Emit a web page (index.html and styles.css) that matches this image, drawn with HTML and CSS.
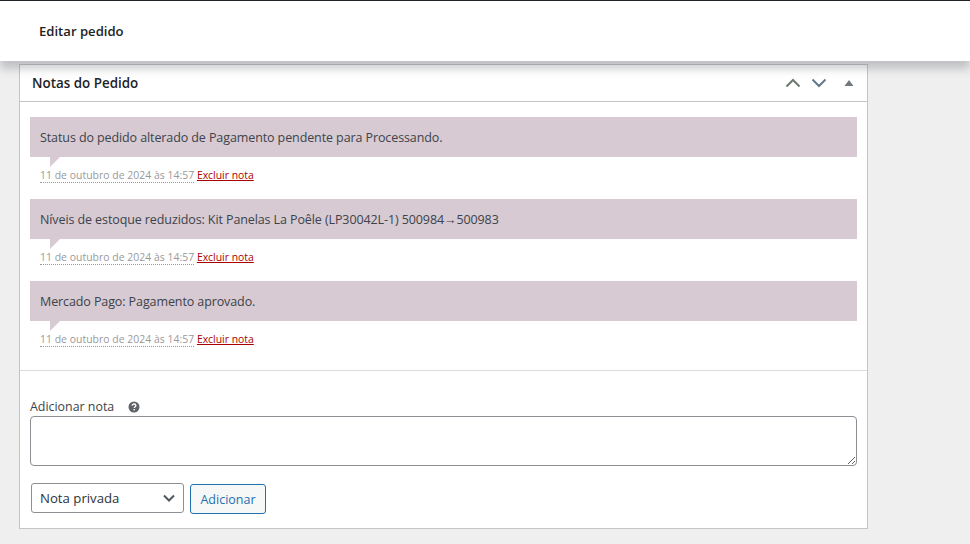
FILE: index.html
```
<!DOCTYPE html>
<html lang="pt-BR">
<head>
<meta charset="utf-8">
<title>Editar pedido</title>
<link rel="stylesheet" href="styles.css">
</head>
<body>
<header class="topbar"><h1 class="topbar-title">Editar pedido</h1></header>
<main class="content">
  <section class="card">
    <div class="card-head">
      <h2 class="card-title">Notas do Pedido</h2>
      <div class="card-actions">
        <svg class="chev" width="16" height="10" viewBox="0 0 16 10"><path d="M1.500 8.500 8 2l6.500 6.500" fill="none" stroke="#6d7a70" stroke-width="2"/></svg>
        <svg class="chev" width="16" height="10" viewBox="0 0 16 10"><path d="M1.500 1.500 8 8l6.500-6.500" fill="none" stroke="#64798c" stroke-width="2"/></svg>
        <svg class="tri" width="10" height="6" viewBox="0 0 10 6"><path d="M5 0l4.500 6h-9z" fill="#72777c"/></svg>
      </div>
    </div>
    <ul class="notes">
      <li class="note">
        <div class="bubble">Status do pedido alterado de Pagamento pendente para Processando.</div>
        <p class="meta"><abbr class="date">11 de outubro de 2024 às 14:57</abbr> <a class="del" href="#">Excluir nota</a></p>
      </li>
      <li class="note">
        <div class="bubble">Níveis de estoque reduzidos: Kit Panelas La Poêle (LP30042L-1) 500984→500983</div>
        <p class="meta"><abbr class="date">11 de outubro de 2024 às 14:57</abbr> <a class="del" href="#">Excluir nota</a></p>
      </li>
      <li class="note">
        <div class="bubble">Mercado Pago: Pagamento aprovado.</div>
        <p class="meta"><abbr class="date">11 de outubro de 2024 às 14:57</abbr> <a class="del" href="#">Excluir nota</a></p>
      </li>
    </ul>
    <form class="add">
      <label class="add-label" for="nota">Adicionar nota
        <svg class="help" width="12" height="12" viewBox="0 0 12 12"><circle cx="6" cy="6" r="5.500" fill="#5f6368"/><path d="M4.200 4.700c0-1.100.8-1.700 1.900-1.700s1.800.6 1.800 1.500c0 1.300-1.600 1.300-1.600 2.500" fill="none" stroke="#fff" stroke-width="1.300"/><rect x="5.500" y="8" width="1.400" height="1.400" fill="#fff"/></svg>
      </label>
      <textarea class="area" id="nota"></textarea>
      <div class="add-row">
        <div class="select">Nota privada
          <svg width="12" height="8" viewBox="0 0 12 8"><path d="M1 1.500l5 5 5-5" fill="none" stroke="#50575e" stroke-width="2"/></svg>
        </div>
        <button class="btn" type="button">Adicionar</button>
      </div>
    </form>
  </section>
</main>
</body>
</html>
```
FILE: styles.css
```
* { box-sizing: border-box; }
html, body { margin: 0; height: 100%; }
body {
  background: #efefef;
  font-family: "Open Sans", "Noto Sans", sans-serif;
  font-size: 12.5px;
  letter-spacing: -.1px;
  color: #3c434a;
  overflow: hidden;
}
.topbar {
  position: relative;
  z-index: 2;
  height: 61px;
  background: #fff;
  border-top: 1px solid #1d2327;
  box-shadow: 0 8px 8px 0 rgba(85, 93, 102, .3);
  display: flex;
  align-items: center;
  padding: 0 0 0 39px;
}
.topbar-title { margin: 0; font-size: 13.1px; font-weight: 600; letter-spacing: 0; color: #1d2327; }
.content { padding: 3px 0 0 19px; }
.card {
  width: 849px;
  background: #fff;
  border: 1px solid #c3c4c7;
}
.card-head {
  height: 37px;
  padding: 0 13px 1px 12px;
  display: flex;
  align-items: center;
  justify-content: space-between;
  border-bottom: 1px solid #c3c4c7;
}
.card-title { margin: 0; font-size: 13.4px; font-weight: 600; letter-spacing: 0; color: #1d2327; }
.card-actions { display: flex; align-items: center; gap: 10px; }
.tri { margin-left: 7px; }
.notes { list-style: none; margin: 0; padding: 15px 10px 0; }
.note { height: 82px; }
.bubble {
  position: relative;
  height: 40px;
  padding: 0 10px;
  display: flex;
  align-items: center;
  background: #d7cad2;
}
.bubble::after {
  content: "";
  position: absolute;
  left: 20px;
  top: 100%;
  border-style: solid;
  border-width: 10px 10px 0 0;
  border-color: #d7cad2 transparent transparent transparent;
}
.meta { margin: 0; padding: 10px 0 0 10px; font-size: 10.4px; letter-spacing: 0; line-height: 16px; color: #999; }
.date { border-bottom: 1px dotted #999; letter-spacing: .04px; }
.del { color: #a00; }
.add {
  margin-top: 7px;
  padding: 27px 10px 14px;
  border-top: 1px solid #dcdcde;
}
.add-label { display: block; height: 18px; line-height: 18px; font-size: 12.4px; letter-spacing: 0; }
.help { margin-left: 11px; vertical-align: -2px; }
.area {
  display: block;
  width: 100%;
  height: 50px;
  border: 1px solid #8c8f94;
  border-radius: 4px;
  background: #fff;
}
.add-row { display: flex; align-items: flex-start; gap: 6px; margin: 17px 0 0 1px; }
.select {
  width: 153px;
  height: 30px;
  padding: 0 8px;
  display: flex;
  align-items: center;
  justify-content: space-between;
  font-size: 13.2px;
  letter-spacing: 0;
  color: #2c3338;
  border: 1px solid #8c8f94;
  border-radius: 3px;
  background: #fff;
}
.btn {
  margin-top: 1px;
  width: 76px;
  height: 30px;
  padding: 0;
  font: inherit;
  letter-spacing: 0;
  color: #2271b1;
  background: #f6f7f7;
  border: 1px solid #2271b1;
  border-radius: 3px;
}
```
